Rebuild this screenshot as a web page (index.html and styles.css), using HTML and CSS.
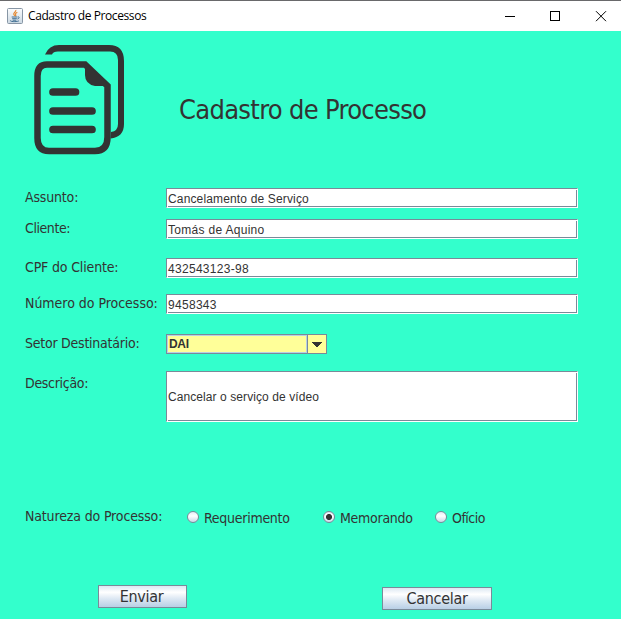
FILE: index.html
```html
<!DOCTYPE html>
<html lang="pt-BR">
<head>
<meta charset="utf-8">
<title>Cadastro de Processos</title>
<link rel="stylesheet" href="styles.css">
</head>
<body>
<div class="window">
  <header class="titlebar">
    <svg class="java" width="16" height="16" viewBox="0 0 16 16">
      <defs><linearGradient id="tile" x1="0" y1="0" x2="0" y2="1"><stop offset="0" stop-color="#fcfdfe"/><stop offset="1" stop-color="#cbd8e2"/></linearGradient></defs>
      <rect x=".5" y=".5" width="15" height="15" rx="1" fill="url(#tile)" stroke="#8796a5"/>
      <path d="M8.8 2c.6 1.8-2.6 2.6-2 4.3.2.7.8 1 1.1 1.7M10.3 4.3C8.9 5 8 5.8 8.7 7c.3.6.1 1-.3 1.4" fill="none" stroke="#e58a35" stroke-width="1.2"/>
      <path d="M4.7 9h5.6M5.2 10.7h4.6M5.7 12.2h3.6M10.7 9c2-.5 2 1.500-.3 2M3.500 12.400c-1.300 1.400 7.200 1.700 8.500.3" fill="none" stroke="#416f93" stroke-width="1"/>
    </svg>
    <span class="caption">Cadastro de Processos</span>
    <svg class="controls" width="102" height="11" viewBox="0 0 102 11" fill="none" stroke="#000">
      <path d="M0 5.500h10M45.500.5h9v9h-9z" shape-rendering="crispEdges"/>
      <path d="M91 .2l10 10M101 .2l-10 10"/>
    </svg>
  </header>
  <main class="content">
    <div class="heading">
      <svg class="docs" width="92" height="112" viewBox="0 0 92 112">
        <path d="M12 10.500H19Q20 7.500 25 7.500H77Q85 7.500 85 16V80Q85 87 78 88L77.500 94.500Q91 93 91 80V17Q91 1 76 1H26Q16 1 12 10.500Z" fill="#333"/>
        <path d="M14 20.500H52L74.500 42V93Q74.500 107 62 107H16Q4.500 107 4.500 94V32Q4.500 20.500 14 20.500Z" fill="#3fc" stroke="#333" stroke-width="6.500"/>
        <path d="M52 18L77 42H62Q52 40 52 31Z" fill="#333"/>
        <path d="M20 48h22.500M20 67h39M20 85.500h39" stroke="#333" stroke-width="7.700" stroke-linecap="round"/>
      </svg>
      <h1>Cadastro de Processo</h1>
    </div>
    <form class="form">
      <div class="row assunto"><label class="t1">Assunto:</label><div class="field">Cancelamento de Serviço</div></div>
      <div class="row cliente"><label class="t2">Cliente:</label><div class="field">Tomás de Aquino</div></div>
      <div class="row cpf"><label class="t3">CPF do Cliente:</label><div class="field">432543123-98</div></div>
      <div class="row numero"><label class="t4">Número do Processo:</label><div class="field">9458343</div></div>
      <div class="row setor"><label class="t5">Setor Destinatário:</label>
        <div class="combo"><span class="value">DAI</span><span class="drop"><svg width="10" height="5" viewBox="0 0 10 5" shape-rendering="crispEdges"><path d="M0 0h10v1H9v1H8v1H7v1H6v1H4V4H3V3H2V2H1V1H0z" fill="#333"/></svg></span></div></div>
      <div class="row descricao"><label class="t6">Descrição:</label><div class="field tall">Cancelar o serviço de vídeo</div></div>
      <div class="nature"><label class="t7">Natureza do Processo:</label>
        <div class="option o1"><i class="radio"></i><span>Requerimento</span></div>
        <div class="option o2"><i class="radio on"></i><span>Memorando</span></div>
        <div class="option o3"><i class="radio"></i><span>Ofício</span></div>
      </div>
      <div class="actions"><button type="button" class="send"><span>Enviar</span></button><button type="button" class="cancel"><span>Cancelar</span></button></div>
    </form>
  </main>
</div>
</body>
</html>
```
FILE: styles.css
```css
* { box-sizing: border-box; }
body { margin: 0; overflow: hidden; color: #333; font-family: "DejaVu Sans Condensed", "DejaVu Sans", sans-serif; }
.window { width: 621px; height: 619px; background: #3fc; border-top: 1px solid #69696b; }
.titlebar { height: 30px; background: #fff; display: flex; align-items: center; padding: 0 14px 0 7px; }
.caption { margin-left: 5px; font: 12px/16px "Open Sans", sans-serif; color: #000; letter-spacing: -.41px; white-space: nowrap; }
.controls { margin-left: auto; }
.heading { display: flex; height: 157px; padding: 13px 0 0 33px; }
h1 { margin: 49px 0 0 54px; font-size: 27px; line-height: 34px; font-weight: 400; letter-spacing: -.7px; white-space: nowrap; }
.row { display: flex; padding-left: 25px; }
label { white-space: nowrap; font-size: 14px; line-height: 18px; letter-spacing: -.3px; width: 141px; flex: none; }
.t1 { letter-spacing: -.17px; }
.t2 { letter-spacing: -.42px; }
.t3 { letter-spacing: -.16px; }
.t4 { letter-spacing: -.03px; }
.t5 { letter-spacing: -.24px; }
.t7 { letter-spacing: -.15px; }
.field { width: 412px; height: 20px; padding: 1px 1px 0; line-height: 19px; font-family: "Liberation Sans", Arial, sans-serif; font-size: 12px; letter-spacing: .15px; background: #fff; border: 1px solid #7a8a99; border-right-color: #fff; border-bottom-color: #fff; box-shadow: inset 1px 1px #fff, inset -1px -1px #7a8a99; }
.cliente { margin-top: 11px; }
.cliente .field, .cpf .field, .numero .field { letter-spacing: .3px; }
.cpf { margin-top: 19px; }
.numero { margin-top: 16px; }
.setor { margin-top: 20px; }
.descricao { margin-top: 17px; }
.descricao label { padding-top: 3px; }
.descricao .tall { height: 51px; line-height: 49px; letter-spacing: .08px; }
.combo { width: 161px; height: 20px; display: flex; background: #ff9; border: 1px solid #7a8a99; }
.value { width: 140px; border: 1px solid #b8cfe5; padding-left: 1px; font: bold 12px/17px "Liberation Sans", Arial, sans-serif; letter-spacing: -.3px; }
.drop { flex: 1; display: flex; align-items: center; justify-content: center; border-left: 1px solid #7a8a99; }
.nature { display: flex; height: 22px; margin-top: 85px; padding-left: 25px; }
.nature label { width: 162px; }
.option { display: flex; font-size: 14px; line-height: 18px; letter-spacing: -.27px; padding-top: 2px; white-space: nowrap; }
.o1 { width: 136px; }
.o2 { width: 112px; }
.o3 { letter-spacing: -.5px; }
.radio { width: 12px; height: 12px; margin: 2px 5px 0 0; flex: none; border: 1px solid #7a8a99; border-radius: 50%; background: linear-gradient(#e4edf6, #fff 40%, #c9d9e9); }
.on { background: radial-gradient(circle, #333 0 2.700px, transparent 3.300px), linear-gradient(#e4edf6, #fff 40%, #c9d9e9); }
.actions { display: flex; margin-top: 56px; padding-left: 98px; gap: 195px; }
button { height: 23px; padding: 0 2px 0 0; border: 1px solid #7a8a99; color: #333; background: linear-gradient(#dde8f3, #fff 30%, #dde8f3 60%, #b8cfe5); font: 16px/20px "DejaVu Sans Condensed", "DejaVu Sans", sans-serif; letter-spacing: -.3px; }
.send { width: 89px; }
.cancel { width: 110px; margin-top: 2px; padding: 0; }
```
